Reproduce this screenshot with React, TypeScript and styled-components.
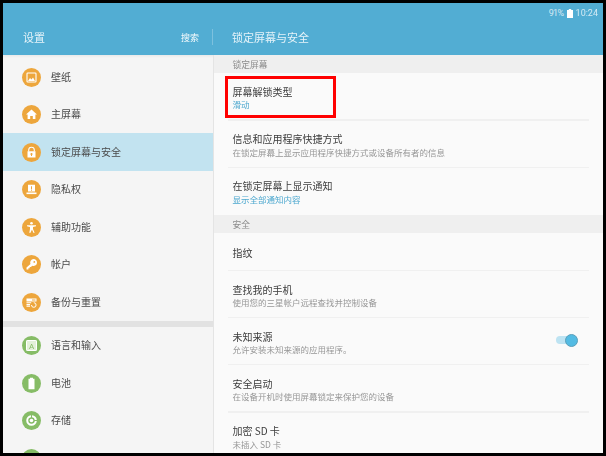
import React from 'react'
import styled, { createGlobalStyle } from 'styled-components'

const GlobalStyle = createGlobalStyle`
  html, body {
    margin: 0;
    padding: 0;
    background: #000;
  }
  body {
    font-family: "Noto Sans CJK SC", "Noto Sans", sans-serif;
  }
`

const ORANGE = '#eda63c'
const GREEN = '#86bc66'

const Frame = styled.div`
  width: 606px;
  height: 456px;
  box-sizing: border-box;
  border: 3px solid #000;
  display: flex;
  flex-direction: column;
  overflow: hidden;
  filter: blur(0.3px);
`

const Header = styled.header`
  height: 52px;
  flex-shrink: 0;
  background: #52adD3;
  color: #fff;
  display: flex;
  flex-direction: column;
`

const StatusBar = styled.div`
  height: 20px;
  display: flex;
  align-items: center;
  justify-content: flex-end;
  gap: 3px;
  padding-right: 5px;
  font-family: Roboto, sans-serif;
  font-size: 9px;
  color: rgba(255, 255, 255, 0.75);
`

const Percent = styled.span`
  letter-spacing: -0.6px;
`

const TitleBar = styled.div`
  height: 32px;
  display: flex;
  align-items: flex-start;
`

const LeftTitle = styled.div`
  width: 210px;
  height: 16px;
  margin-top: 6px;
  box-sizing: border-box;
  padding: 0 13px 0 20px;
  border-right: 1px solid rgba(255, 255, 255, 0.25);
  display: flex;
  align-items: center;
  justify-content: space-between;
`

const AppName = styled.span`
  font-size: 11px;
  color: rgba(255, 255, 255, 0.85);
`

const SearchLink = styled.span`
  font-size: 9px;
  color: rgba(255, 255, 255, 0.95);
`

const PageTitle = styled.span`
  font-size: 11px;
  line-height: 16px;
  margin-top: 6px;
  margin-left: 19px;
  color: rgba(255, 255, 255, 0.85);
`

const Body = styled.div`
  flex: 1;
  min-height: 0;
  display: flex;
`

const Sidebar = styled.nav`
  width: 210px;
  flex-shrink: 0;
  box-sizing: content-box;
  padding-top: 3.25px;
  background: linear-gradient(#e9e9e9 0, #f5f5f5 3px);
  border-right: 1.5px solid #e4e4e4;
  overflow: hidden;
`

const MenuRow = styled.div<{ $active?: boolean }>`
  height: 37.5px;
  display: flex;
  align-items: center;
  gap: 10px;
  padding-left: 19px;
  background: ${(p) => (p.$active ? '#c2e3f0' : '#f5f5f5')};
`

const MenuIcon = styled.span<{ $color: string }>`
  width: 19px;
  height: 19px;
  border-radius: 50%;
  background: ${(p) => p.$color};
  display: flex;
  flex-shrink: 0;
`

const MenuLabel = styled.span`
  margin-bottom: 2px;
  font-size: 10px;
  color: #4a4a4a;
`

const MenuGap = styled.div`
  height: 6px;
  background: #e2e2e2;
`

const Content = styled.main`
  flex: 1;
  min-width: 0;
  background: #fafafa;
  overflow: hidden;
`

const Section = styled.div`
  height: 18.4px;
  box-sizing: border-box;
  padding: 0.8px 0 0 18.5px;
  background: #efefef;
  font-size: 8.75px;
  line-height: 17.6px;
  color: #8c8c8c;
`

const Row = styled.div<{ $short?: boolean; $last?: boolean }>`
  position: relative;
  height: ${(p) => (p.$short ? 37.6 : 47.2)}px;
  box-sizing: border-box;
  padding: 2px 26px 0 18.5px;
  display: flex;
  align-items: center;
  justify-content: space-between;

  &::after {
    content: '';
    display: ${(p) => (p.$last ? 'none' : 'block')};
    position: absolute;
    left: 13.5px;
    right: 14px;
    bottom: 0;
    height: 1.2px;
    background: #f0f0f0;
  }
`

const RowText = styled.div`
  display: flex;
  flex-direction: column;
`

const RowTitle = styled.div`
  font-size: 10px;
  line-height: 13.5px;
  color: #3c3c3c;
`

const RowSub = styled.div<{ $accent?: boolean }>`
  font-size: 8.5px;
  line-height: 12.5px;
  color: ${(p) => (p.$accent ? '#4da8cf' : '#979797')};
`

const Highlight = styled.div`
  position: absolute;
  left: 10.5px;
  top: 2.7px;
  width: 111px;
  height: 42px;
  box-sizing: border-box;
  border: 3px solid #ff0000;
`

const Toggle = styled.div`
  position: relative;
  width: 16px;
  height: 8px;
  margin: -5px 5px 0 0;
  border-radius: 4px;
  background: #bde3f2;
`

const Knob = styled.div`
  position: absolute;
  left: 9px;
  top: -2.7px;
  width: 13px;
  height: 13px;
  box-sizing: border-box;
  border-radius: 50%;
  background: #53bbe3;
  border: 0.5px solid #5a9fba;
`

const Glyph: React.FC<{ children: React.ReactNode }> = ({ children }) => (
  <svg width="19" height="19" viewBox="0 0 19 19" fill="#fff">
    {children}
  </svg>
)

const icons: Record<string, React.ReactNode> = {
  wallpaper: (
    <Glyph>
      <rect x="5" y="5" width="9" height="9" rx="0.8" fill="none" stroke="#fff" strokeWidth="1.1" />
      <path d="M6 13l2-3 1.5 1.5L11 9.5l2 3.5z" />
    </Glyph>
  ),
  home: (
    <Glyph>
      <path d="M9.5 4.5L15 9.6h-1.6V14H10.8v-3H8.2v3H5.6V9.6H4z" />
    </Glyph>
  ),
  lock: (
    <Glyph>
      <path d="M6.7 8.4V7a2.8 2.8 0 0 1 5.6 0v1.4" fill="none" stroke="#fff" strokeWidth="1.1" />
      <path fillRule="evenodd" d="M5.5 8.3h8V14.5h-8zM9.5 10a1 1 0 0 0-.5 1.9V13h1v-1.100A1 1 0 0 0 9.500 10z" />
    </Glyph>
  ),
  privacy: (
    <Glyph>
      <path fillRule="evenodd" d="M6 4.800h7v6.700H6zM9 6.300v3h1v-3zM9 9.800v.9h1v-.9z" />
      <rect x="4.500" y="12.500" width="10" height="1.600" />
    </Glyph>
  ),
  access: (
    <Glyph>
      <circle cx="9.500" cy="5.200" r="1.300" />
      <path d="M5 7.200h9v1.100l-3 .6V11l1.600 3.700-1 .4-1.600-3.400h-.1l-1.600 3.400-1-.4L8 11V8.900l-3-.6z" />
    </Glyph>
  ),
  key: (
    <Glyph>
      <path fillRule="evenodd" d="M11.500 4a3.500 3.500 0 1 1-1.300 6.750L9 12h-1.300v1.300H6.400v1.300H4.500v-2l4-3.700A3.500 3.500 0 0 1 11.500 4zM12.300 6a.9.9 0 1 0 0 1.800.9.9 0 0 0 0-1.800z" />
    </Glyph>
  ),
  backup: (
    <Glyph>
      <path fillRule="evenodd" d="M4.500 5.500h10v3h-10zM10 6.500v1h3.500v-1z" />
      <path d="M4.500 9.300h4.700v1H4.500zM4.500 11h3.500v1.200H4.500zM4.500 12.800h3.500v1H4.500z" />
      <path d="M9.500 12a2.300 2.300 0 1 0 2.300-2.300" fill="none" stroke="#fff" strokeWidth="1" />
    </Glyph>
  ),
  language: (
    <Glyph>
      <rect x="4.500" y="4.500" width="10" height="10" rx="0.600" fill="#e4f1da" stroke="#fff" />
      <text x="9.500" y="12.600" fontSize="8" textAnchor="middle" fill={GREEN} fontFamily="Roboto, sans-serif">A</text>
    </Glyph>
  ),
  battery: (
    <Glyph>
      <path d="M8 3.800h3v1h1.500v10.500h-6V4.800H8z" />
    </Glyph>
  ),
  storage: (
    <Glyph>
      <path d="M9 4.200a5.300 5.300 0 1 0 5.800 5.800h-2a3.300 3.300 0 1 1-3.800-3.800z" />
      <path d="M10 4.200a5.300 5.300 0 0 1 4.800 4.800h-2A3.300 3.300 0 0 0 10 6.200z" />
      <circle cx="9.500" cy="9.500" r="1.800" />
    </Glyph>
  ),
  next: <Glyph>{null}</Glyph>,
}

const groupOne = [
  { id: 'wallpaper', label: '壁纸' },
  { id: 'home', label: '主屏幕' },
  { id: 'lock', label: '锁定屏幕与安全', active: true },
  { id: 'privacy', label: '隐私权' },
  { id: 'access', label: '辅助功能' },
  { id: 'key', label: '帐户' },
  { id: 'backup', label: '备份与重置' },
]

const groupTwo = [
  { id: 'language', label: '语言和输入' },
  { id: 'battery', label: '电池' },
  { id: 'storage', label: '存储' },
  { id: 'next', label: '' },
]

const App: React.FC = () => {
  return (
    <>
      <GlobalStyle />
      <Frame>
        <Header>
          <StatusBar>
            <Percent>91%</Percent>
            <svg width="6" height="9" viewBox="0 0 6 9" fill="#fff">
              <path d="M1.800 0h2.400v1H6v8H0V1h1.800z" />
            </svg>
            <span>10:24</span>
          </StatusBar>
          <TitleBar>
            <LeftTitle>
              <AppName>设置</AppName>
              <SearchLink>搜索</SearchLink>
            </LeftTitle>
            <PageTitle>锁定屏幕与安全</PageTitle>
          </TitleBar>
        </Header>
        <Body>
          <Sidebar>
            {groupOne.map((item) => (
              <MenuRow key={item.id} $active={item.active}>
                <MenuIcon $color={ORANGE}>{icons[item.id]}</MenuIcon>
                <MenuLabel>{item.label}</MenuLabel>
              </MenuRow>
            ))}
            <MenuGap />
            {groupTwo.map((item) => (
              <MenuRow key={item.id}>
                <MenuIcon $color={GREEN}>{icons[item.id]}</MenuIcon>
                {item.label && <MenuLabel>{item.label}</MenuLabel>}
              </MenuRow>
            ))}
          </Sidebar>
          <Content>
            <Section>锁定屏幕</Section>
            <Row>
              <RowText>
                <RowTitle>屏幕解锁类型</RowTitle>
                <RowSub $accent>滑动</RowSub>
              </RowText>
              <Highlight />
            </Row>
            <Row>
              <RowText>
                <RowTitle>信息和应用程序快捷方式</RowTitle>
                <RowSub>在锁定屏幕上显示应用程序快捷方式或设备所有者的信息</RowSub>
              </RowText>
            </Row>
            <Row $last>
              <RowText>
                <RowTitle>在锁定屏幕上显示通知</RowTitle>
                <RowSub $accent>显示全部通知内容</RowSub>
              </RowText>
            </Row>
            <Section>安全</Section>
            <Row $short>
              <RowText>
                <RowTitle>指纹</RowTitle>
              </RowText>
            </Row>
            <Row>
              <RowText>
                <RowTitle>查找我的手机</RowTitle>
                <RowSub>使用您的三星帐户远程查找并控制设备</RowSub>
              </RowText>
            </Row>
            <Row>
              <RowText>
                <RowTitle>未知来源</RowTitle>
                <RowSub>允许安装未知来源的应用程序。</RowSub>
              </RowText>
              <Toggle>
                <Knob />
              </Toggle>
            </Row>
            <Row>
              <RowText>
                <RowTitle>安全启动</RowTitle>
                <RowSub>在设备开机时使用屏幕锁定来保护您的设备</RowSub>
              </RowText>
            </Row>
            <Row $last>
              <RowText>
                <RowTitle>加密 SD 卡</RowTitle>
                <RowSub>未插入 SD 卡</RowSub>
              </RowText>
            </Row>
          </Content>
        </Body>
      </Frame>
    </>
  )
}

export default App
